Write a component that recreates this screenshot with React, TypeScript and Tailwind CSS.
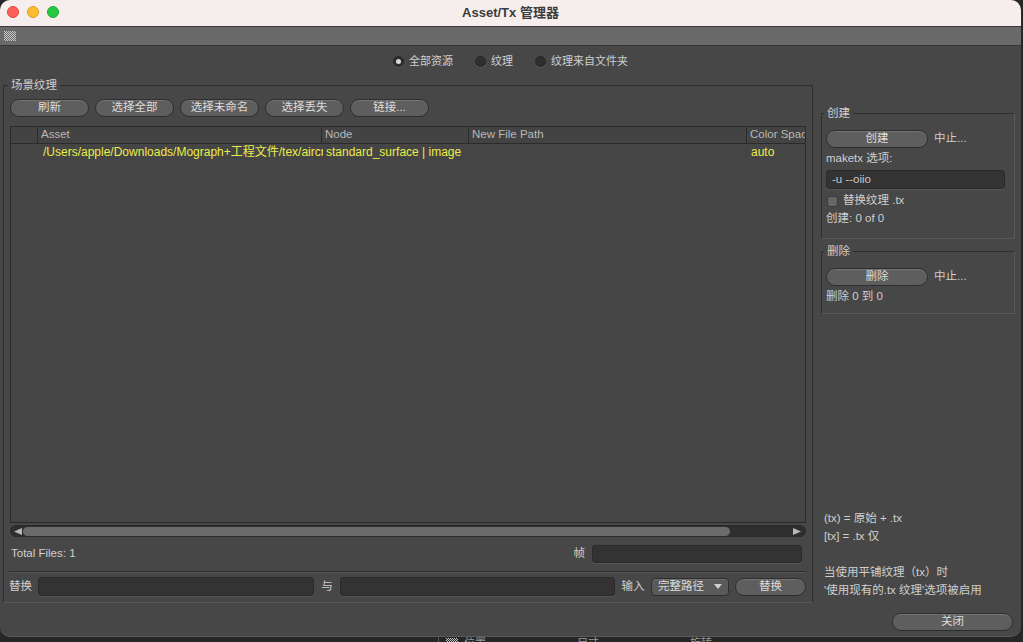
import React from "react";

const FONT = { fontFamily: '"Liberation Sans", "Noto Sans CJK SC", sans-serif' };

function Grip() {
  return (
    <svg width="12" height="10" viewBox="0 0 12 10">
      {Array.from({ length: 10 }).map((_, r) =>
        Array.from({ length: 12 }).map((_, c) =>
          (r + c) % 2 === 0 ? <rect key={`${r}-${c}`} x={c} y={r} width="1" height="1" fill="#c8c8c8" /> : null
        )
      )}
    </svg>
  );
}

function Radio({ on, label }: { on?: boolean; label: string }) {
  return (
    <div className="flex items-center gap-[5px]">
      <div className="w-[11px] h-[11px] rounded-full bg-[#2e2e2e] border border-[#262626] flex items-center justify-center shadow-[0_1px_0_#555]">
        {on && <div className="w-[5px] h-[5px] rounded-full bg-[#d8d8d8]" />}
      </div>
      <span className="text-[11px] text-[#cfcfcf] whitespace-nowrap">{label}</span>
    </div>
  );
}

function Btn({ label, w }: { label: string; w: string }) {
  return (
    <div
      className={`${w} h-[18px] shrink-0 rounded-full bg-[#5e5e5e] border border-[#2e2e2e] shadow-[inset_0_1px_0_#747474] flex items-center justify-center text-[11.5px] text-[#dcdcdc] whitespace-nowrap`}
    >
      {label}
    </div>
  );
}

function Input({ w, text }: { w: string; text?: string }) {
  return (
    <div className={`${w} h-[19px] shrink-0 rounded-[3px] bg-[#333333] border border-[#2a2a2a] shadow-[0_1px_0_#555] flex items-center px-[5px] text-[11.5px] text-[#c8c8c8]`}>
      {text}
    </div>
  );
}

export default function App() {
  return (
    <div className="relative w-[1023px] h-[642px] bg-[#262626] overflow-hidden" style={FONT}>
      {/* background window remnant */}
      <div className="absolute left-[438px] top-[634px] w-px h-[10px] bg-[#555]" />
      <div className="absolute left-[446px] top-[637px] flex items-center gap-[6px] text-[11px] text-[#9a9a9a] leading-[12px]">
        <Grip />
        <span>位置</span>
      </div>
      <div className="absolute left-[577px] top-[637px] text-[11px] text-[#9a9a9a] leading-[12px]">尺寸</div>
      <div className="absolute left-[690px] top-[637px] text-[11px] text-[#9a9a9a] leading-[12px]">旋转</div>

      <div className="relative w-[1021px] h-[637px] rounded-[10px] overflow-hidden bg-[#474747] flex flex-col border-b border-[#5a5a5a]">
        {/* title bar */}
        <div className="relative h-[27px] bg-[#f6eeed] border-b border-[#3a3a3a] flex items-center justify-center shrink-0">
          <div className="absolute left-[7px] top-[6px] flex gap-[8px]">
            <div className="w-[12px] h-[12px] rounded-full bg-[#fe5f57] border border-[#e14640]" />
            <div className="w-[12px] h-[12px] rounded-full bg-[#febc2e] border border-[#dfa023]" />
            <div className="w-[12px] h-[12px] rounded-full bg-[#28c840] border border-[#1dad2b]" />
          </div>
          <span className="text-[13px] font-bold text-[#3b3b3b]">Asset/Tx 管理器</span>
        </div>
        {/* toolbar */}
        <div className="h-[19px] bg-[#6a6a6a] border-b border-[#353535] flex items-center pl-[4px] shrink-0">
          <Grip />
        </div>

        {/* radio row */}
        <div className="h-[30px] flex items-center justify-center gap-[22px] shrink-0">
          <Radio on label="全部资源" />
          <Radio label="纹理" />
          <Radio label="纹理来自文件夹" />
        </div>

        <div className="flex mt-[9px]">
          {/* left group */}
          <div className="relative ml-[3px] w-[810px] h-[518px] border-t border-l border-[#2e2e2e] border-r border-r-[#2e2e2e] border-b border-b-[#5a5a5a] pl-[6px] pr-[6px] pt-[13px] flex flex-col">
            <span className="absolute left-[4px] top-[-8px] px-[3px] bg-[#474747] text-[11.5px] leading-[14px] text-[#cfcfcf]">场景纹理</span>
            <div className="flex gap-[6px]">
              <Btn label="刷新" w="w-[79px]" />
              <Btn label="选择全部" w="w-[79px]" />
              <Btn label="选择未命名" w="w-[79px]" />
              <Btn label="选择丢失" w="w-[79px]" />
              <Btn label="链接..." w="w-[79px]" />
            </div>

            {/* table */}
            <div className="mt-[9px] h-[397px] border border-[#2b2b2b] bg-[#454545] flex flex-col overflow-hidden">
              <div className="h-[17px] flex border-b border-[#2b2b2b] bg-[#434343] text-[11.5px] text-[#b8b8b8] shrink-0">
                <div className="w-[27px] border-r border-[#2b2b2b]" />
                <div className="w-[284px] border-r border-[#2b2b2b] px-[3px] flex items-center">Asset</div>
                <div className="w-[147px] border-r border-[#2b2b2b] px-[3px] flex items-center">Node</div>
                <div className="w-[278px] border-r border-[#2b2b2b] px-[3px] flex items-center">New File Path</div>
                <div className="flex-1 px-[3px] flex items-center whitespace-nowrap overflow-hidden">Color Spac</div>
              </div>
              <div className="flex h-[16px] text-[12px] text-[#ecec4a] items-center">
                <div className="w-[28px] shrink-0" />
                <div className="w-[284px] shrink-0 pl-[4px] pr-[2px] whitespace-nowrap overflow-hidden">/Users/apple/Downloads/Mograph+工程文件/tex/aircr</div>
                <div className="w-[147px] shrink-0 px-[3px] whitespace-nowrap overflow-hidden">standard_surface | image</div>
                <div className="w-[278px] shrink-0 px-[3px]" />
                <div className="flex-1 px-[3px]">auto</div>
              </div>
            </div>

            {/* scrollbar */}
            <div className="mt-[2px] h-[12px] rounded-full bg-[#2e2e2e] border border-[#2a2a2a] flex items-center px-[2px] relative">
              <svg width="8" height="7" viewBox="0 0 8 7" className="ml-[1px]"><polygon points="0,3.5 8,0 8,7" fill="#b8b8b8" /></svg>
              <div className="ml-[1px] w-[707px] h-[9px] rounded-full bg-[#6b6b6b]" />
              <div className="flex-1" />
              <svg width="8" height="7" viewBox="0 0 8 7" className="mr-[2px]"><polygon points="8,3.5 0,0 0,7" fill="#b8b8b8" /></svg>
            </div>

            {/* total */}
            <div className="mt-[8px] h-[18px] flex items-center text-[11.5px] text-[#cfcfcf]">
              <span className="ml-[1px]">Total Files: 1</span>
              <div className="flex-1" />
              <span className="mr-[7px]">帧</span>
              <div className="w-[210px] h-[18px] rounded-[3px] bg-[#333333] border border-[#2a2a2a] shadow-[0_1px_0_#555] mr-[4px]" />
            </div>

            <div className="mt-[8px] h-[2px] border-t border-[#2e2e2e] border-b border-b-[#555] -ml-[1px]" />

            {/* bottom row */}
            <div className="mt-[4px] h-[19px] flex items-center text-[11.5px] text-[#cfcfcf] -ml-[1px] whitespace-nowrap">
              <span className="w-[28px] shrink-0">替换</span>
              <div className="ml-[1px] shrink-0"><Input w="w-[276px]" /></div>
              <span className="w-[26px] shrink-0 text-center">与</span>
              <div className="shrink-0"><Input w="w-[275px]" /></div>
              <span className="w-[36px] shrink-0 text-center">输入</span>
              <div className="shrink-0 w-[78px] h-[18px] rounded-[4px] bg-[#5a5a5a] border border-[#2e2e2e] shadow-[inset_0_1px_0_#6e6e6e] flex items-center pl-[6px] pr-[6px] text-[#dcdcdc]">
                <span>完整路径</span>
                <div className="flex-1" />
                <svg width="8" height="5" viewBox="0 0 8 5"><polygon points="0,0 8,0 4,5" fill="#d0d0d0" /></svg>
              </div>
              <div className="ml-[6px] shrink-0"><Btn label="替换" w="w-[71px]" /></div>
            </div>
          </div>

          {/* right panel */}
          <div className="ml-[8px] w-[194px] h-[518px] flex flex-col text-[11.5px] text-[#cfcfcf]">
            <div className="relative mt-[28px] h-[126px] border-t border-l border-[#2e2e2e] border-r border-r-[#5a5a5a] border-b border-b-[#5a5a5a] pl-[4px] pt-[16px] flex flex-col">
              <span className="absolute left-[2px] top-[-8px] px-[3px] bg-[#474747] leading-[14px]">创建</span>
              <div className="flex items-center gap-[6px]">
                <Btn label="创建" w="w-[102px]" />
                <span>中止...</span>
              </div>
              <div className="mt-[3px] h-[16px] flex items-center">maketx 选项:</div>
              <div className="mt-[3px]">
                <div className="w-[179px] h-[19px] rounded-[3px] bg-[#333333] border border-[#2a2a2a] shadow-[0_1px_0_#555] flex items-center px-[5px] text-[#c8c8c8]">-u --oiio</div>
              </div>
              <div className="mt-[4px] h-[16px] flex items-center gap-[5px]">
                <div className="ml-[1px] w-[11px] h-[11px] rounded-[3px] bg-[#666666] border border-[#3a3a3a]" />
                <span>替换纹理 .tx</span>
              </div>
              <div className="mt-[2px] h-[16px] flex items-center">创建: 0 of 0</div>
            </div>

            <div className="relative mt-[12px] h-[63px] border-t border-l border-[#2e2e2e] border-r border-r-[#5a5a5a] border-b border-b-[#5a5a5a] pl-[4px] pt-[16px] flex flex-col">
              <span className="absolute left-[2px] top-[-8px] px-[3px] bg-[#474747] leading-[14px]">删除</span>
              <div className="flex items-center gap-[6px]">
                <Btn label="删除" w="w-[102px]" />
                <span>中止...</span>
              </div>
              <div className="mt-[3px] h-[16px] flex items-center">删除 0 到 0</div>
            </div>

            <div className="mt-auto mb-[4px] pl-[3px] flex flex-col leading-[18px]">
              <span>(tx) = 原始 + .tx</span>
              <span>[tx] = .tx 仅</span>
              <span className="h-[18px]" />
              <span>当使用平铺纹理（tx）时</span>
              <span>'使用现有的.tx 纹理'选项被启用</span>
            </div>
          </div>
        </div>

        {/* footer */}
        <div className="flex justify-end mt-[10px] mr-[8px]">
          <Btn label="关闭" w="w-[121px]" />
        </div>
      </div>
    </div>
  );
}
